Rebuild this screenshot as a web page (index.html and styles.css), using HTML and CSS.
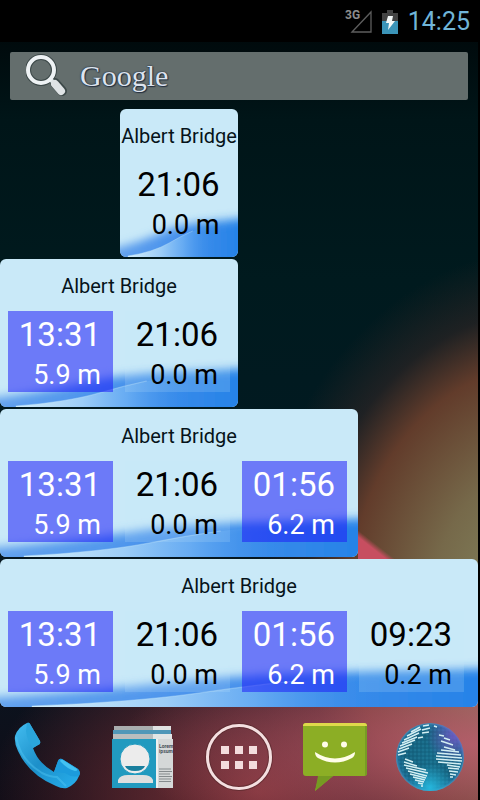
FILE: index.html
```html
<!DOCTYPE html>
<html lang="en">
<head>
<meta charset="utf-8">
<meta name="viewport" content="width=device-width, initial-scale=1">
<title>Home</title>
<link rel="stylesheet" href="styles.css">
</head>
<body>
<svg class="defs" aria-hidden="true">
  <defs>
    <linearGradient id="deep" x1="0" y1="0" x2="1" y2="0">
      <stop offset="0" stop-color="#6aa6ee"/>
      <stop offset=".45" stop-color="#4a93ec"/>
      <stop offset="1" stop-color="#1c7ee6"/>
    </linearGradient>
    <linearGradient id="front" x1="0" y1="0" x2="1" y2="0">
      <stop offset="0" stop-color="#d4effb"/>
      <stop offset=".3" stop-color="#9ccdf7"/>
      <stop offset=".5" stop-color="#6fb2f4" stop-opacity=".8"/>
      <stop offset=".8" stop-color="#2f88ea" stop-opacity="0"/>
    </linearGradient>
    <filter id="soft" x="-20%" y="-40%" width="140%" height="180%"><feGaussianBlur stdDeviation="3 5"/></filter>
    <symbol id="wave" viewBox="0 -12 120 60" preserveAspectRatio="none">
      <path d="M-20 43 Q20 34 46 22 Q62 15 88 13 Q108 11 140 8 V70 H-20Z" fill="url(#deep)" filter="url(#soft)"/>
      <path d="M8 47 Q34 43 50 34 Q70 22 91 17 Q108 15 120 17 V48 H8Z" fill="url(#front)"/>
      <path d="M8 47 Q34 43 50 34 Q62 27 74 22" fill="none" stroke="#bfe4fa" stroke-opacity=".4" stroke-width="1"/>
    </symbol>
  </defs>
</svg>
<div class="screen">
  <header class="status">
    <svg class="signal" viewBox="0 0 28 26" role="img" aria-label="3G signal">
      <text x="1" y="10" class="signal-text">3G</text>
      <path d="M8 23 L27 3 V23Z" fill="none" stroke="#5d5d5d" stroke-width="1.3"/>
    </svg>
    <svg class="battery" viewBox="0 0 16 24" role="img" aria-label="Battery charging">
      <path d="M0 3h5V0h6v3h5v21H0Z" fill="#434343"/>
      <path d="M0 11h16v13H0Z" fill="#3b94b8"/>
      <path d="M6 6h5l-1 5h3L6 20l1-7H4Z" fill="#f4f8f8"/>
    </svg>
    <time class="clock">14:25</time>
  </header>

  <button class="search" type="button" aria-label="Google search">
    <svg class="lens" viewBox="0 0 44 44" aria-hidden="true">
      <path d="M29 29 L36 37" stroke="#3c4848" stroke-width="10" stroke-linecap="round"/>
      <circle cx="15" cy="16" r="13" fill="none" stroke="#3c4848" stroke-width="6"/>
      <path d="M24 25 L29 30" stroke="#dfe5e7" stroke-width="4"/>
      <path d="M29 30 L35 37" stroke="#dfe3e5" stroke-width="8" stroke-linecap="round"/>
      <circle cx="15" cy="16" r="13" fill="none" stroke="#eef2f4" stroke-width="4"/>
    </svg>
    <span class="brand">Google</span>
  </button>

  <main class="widgets">
    <section class="widget span-1">
      <svg class="wave" aria-hidden="true"><use href="#wave"/></svg>
      <h2>Albert Bridge</h2>
      <ul class="tides">
        <li class="tide"><time>21:06</time><span>0.0 m</span></li>
      </ul>
    </section>
    <section class="widget span-2">
      <svg class="wave" aria-hidden="true"><use href="#wave"/></svg>
      <h2>Albert Bridge</h2>
      <ul class="tides">
        <li class="tide high"><time>13:31</time><span>5.9 m</span></li>
        <li class="tide"><time>21:06</time><span>0.0 m</span></li>
      </ul>
    </section>
    <section class="widget span-3">
      <svg class="wave" aria-hidden="true"><use href="#wave"/></svg>
      <h2>Albert Bridge</h2>
      <ul class="tides">
        <li class="tide high"><time>13:31</time><span>5.9 m</span></li>
        <li class="tide"><time>21:06</time><span>0.0 m</span></li>
        <li class="tide high"><time>01:56</time><span>6.2 m</span></li>
      </ul>
    </section>
    <section class="widget span-4">
      <svg class="wave" aria-hidden="true"><use href="#wave"/></svg>
      <h2>Albert Bridge</h2>
      <ul class="tides">
        <li class="tide high"><time>13:31</time><span>5.9 m</span></li>
        <li class="tide"><time>21:06</time><span>0.0 m</span></li>
        <li class="tide high"><time>01:56</time><span>6.2 m</span></li>
        <li class="tide"><time>09:23</time><span>0.2 m</span></li>
      </ul>
    </section>
  </main>

  <nav class="dock" aria-label="Dock">
    <button type="button" aria-label="Phone">
      <svg viewBox="0 0 72 72">
        <defs>
          <linearGradient id="ph" x1="0" y1="0" x2="1" y2="1"><stop offset="0" stop-color="#43bdf0"/><stop offset=".5" stop-color="#1c8fc9"/><stop offset="1" stop-color="#27b0ee"/></linearGradient>
        </defs>
        <path d="M15 2 Q17 1 18 3 L28 20 Q29 23 26 24 L21 27 Q26 42 42 51 L46 40 Q47 37 50 38 L66 48 Q69 51 67 55 Q64 63 55 67 Q50 68 44 65 Q17 54 6 30 Q2 22 3 15 Q6 6 15 2Z" fill="url(#ph)"/>
        <path d="M15 2 Q17 1 18 3 L28 20 Q29 23 26 24 L21 27 Q15 20 14 10Z" fill="#2ba6dc"/>
        <path d="M4 16 Q8 39 30 52 Q38 56 45 56 L54 65" fill="none" stroke="#54caf5" stroke-width="2" opacity=".4"/>
        <path d="M46 40 Q47 37 50 38 L66 48 Q69 51 67 55 Q60 57 53 52 L42 51Z" fill="#1c9bdc"/>
        <path d="M48 40 Q49 38 51 39 L65 48 Q66 50 63 50 Q55 48 48 40Z" fill="#43c2f2"/>
      </svg>
    </button>
    <button type="button" aria-label="People">
      <svg viewBox="0 0 72 72">
        <path d="M7 5h57v10H7Z" fill="#a9adae"/><path d="M46 5h18v10H46Z" fill="#e0e2e2"/>
        <path d="M6 9h58v4H6Z" fill="#5097b8"/>
        <path d="M6 13h59v8H6Z" fill="#b9bdbe"/><path d="M46 13h19v8H46Z" fill="#e3e5e5"/>
        <path d="M5 18h44v49H5Z" fill="#219abf"/>
        <path d="M49 18h17v49H49Z" fill="#d5d8d8"/><path d="M49 18h2v49h-2Z" fill="#eef0f0"/>
        <path d="M11 62v-3q2-5 10-5h15q8 0 10 5v3Z" fill="#dedfdf"/>
        <circle cx="28" cy="38" r="15" fill="#ececec" stroke="#219abf"/>
        <path d="M18 45h20q-2 5-10 5T18 45Z" fill="#197f9e"/>
        <text x="52" y="27" class="tiny">Lorem</text><text x="52" y="32" class="tiny">ipsum</text>
        <path d="M52 48h12M52 50.500h13M52 53h11M52 55.500h13M52 58h12M52 60.500h12" stroke="#858b8d"/>
      </svg>
    </button>
    <button type="button" aria-label="All apps">
      <svg viewBox="0 0 72 72">
        <circle cx="36" cy="36" r="31.500" fill="none" stroke="#532629" stroke-opacity=".6" stroke-width="5"/>
        <circle cx="36" cy="36" r="31.500" fill="none" stroke="#f4dfe0" stroke-width="3"/>
        <path d="M18 25h8v8h-8ZM32 25h8v8h-8ZM46 25h8v8h-8ZM18 40h8v8h-8ZM32 40h8v8h-8ZM46 40h8v8h-8Z" fill="#f3dddd"/>
      </svg>
    </button>
    <button type="button" aria-label="Messaging">
      <svg viewBox="0 0 72 72">
        <path d="M7 2h58q3 0 3 3v47q0 3-3 3H34L16 70l4-15H7q-3 0-3-3V5q0-3 3-3Z" fill="#8cae25"/>
        <path d="M66 4h2v48q0 3-3 3h1Z" fill="#779b25"/>
        <path d="M4 5q0-3 3-3h58q3 0 3 3Z" fill="#dfd94b"/>
        <path d="M19 55h15L16 70Z" fill="#769a22"/>
        <circle cx="26" cy="23.500" r="3" fill="#fffde8"/><circle cx="45" cy="23.500" r="3" fill="#fffde8"/>
        <path d="M16 31 Q36 44 56 31 Q56 35 53 37 Q36 46 19 37 Q16 35 16 31Z" fill="#fffde8"/>
      </svg>
    </button>
    <button type="button" aria-label="Browser">
      <svg viewBox="0 0 72 72">
        <defs>
          <radialGradient id="gl" cx=".5" cy=".5" r=".5"><stop offset="0" stop-color="#176d8b"/><stop offset=".75" stop-color="#16627f"/><stop offset=".93" stop-color="#1c6e96"/><stop offset="1" stop-color="#4b8db8"/></radialGradient>
          <radialGradient id="rim" cx=".85" cy=".2" r=".4"><stop offset="0" stop-color="#7956c8" stop-opacity=".8"/><stop offset="1" stop-color="#7956c8" stop-opacity="0"/></radialGradient>
          <radialGradient id="low" cx=".5" cy=".95" r=".35"><stop offset="0" stop-color="#25b6dc"/><stop offset="1" stop-color="#25b6dc" stop-opacity="0"/></radialGradient>
          <pattern id="dots" width="4" height="4" patternUnits="userSpaceOnUse"><circle cx="1" cy="1" r=".8" fill="#2d8fac"/><circle cx="3" cy="3" r=".8" fill="#0f526b"/></pattern>
        </defs>
        <circle cx="36" cy="36" r="34" fill="url(#gl)"/>
        <circle cx="36" cy="36" r="32" fill="url(#dots)" opacity=".6"/>
        <circle cx="36" cy="36" r="34" fill="url(#low)"/><circle cx="36" cy="36" r="34" fill="url(#rim)"/>
        <g fill="none" stroke="#d3eff3" stroke-width="1.500">
          <path d="M17 11l9-5M13 15l14-7M10 19l15-7M8 22l15-6M6 25l15-6M5 28l13-5M4 31l11-4M4 34l8-2M29 5l6-1M28 9l8-2M28 12l7-1M40 5l3 1M24 17l5-1"/>
          <path d="M11 38l8 3M10 41l13 4M10 44l22 5M12 47l22 5M14 50l19 5M16 53l16 4M19 56l12 3M21 59l9 2M24 62l5 1M27 65l2 0"/>
          <path d="M50 17l6 2M47 20l12 4M45 14l5 1M50 26l11 3M47 29l18 2M43 32l24 2M42 35l26 2M42 38l26 2M44 41l23 2M53 44l13 2M54 47l11 1M55 50l9 1M56 53l6 1M56 56l3 0"/>
        </g>
      </svg>
    </button>
  </nav>
</div>
</body>
</html>
```
FILE: styles.css
```css
* { box-sizing: border-box; }

body {
  margin: 0;
  background: #000;
  font-family: Roboto, "Liberation Sans", sans-serif;
}

.defs { position: absolute; width: 0; height: 0; }

button {
  padding: 0;
  border: 0;
  background: none;
  font: inherit;
  cursor: pointer;
}

.screen {
  display: flex;
  flex-direction: column;
  min-height: 100vh;
  margin-right: 2px;
  background:
    radial-gradient(ellipse 75% 14% at 100% 93%, rgba(190, 95, 112, .85), transparent),
    radial-gradient(ellipse 56% 22% at 54% 99%, rgba(130, 52, 58, .95), rgba(110, 45, 52, .6) 50%, transparent),
    linear-gradient(38deg, #c74e60 38%, transparent 46%) 358px 530px / 60px 40px no-repeat,
    radial-gradient(ellipse 62% 45% at 115% 76%, #81815b 15%, #76694a 40%, #623c2b 68%, rgba(60, 40, 38, .5) 83%, transparent),
    linear-gradient(#000a0c 5%, #001518 15%, #001a1e 35%, #021a22 60%, #0c121d 88%, #100d17);
}

.status {
  display: flex;
  align-items: center;
  justify-content: flex-end;
  gap: 10px;
  height: 42px;
  padding: 2px 8px 0;
  background: #000;
}

.signal { width: 28px; height: 26px; }
.signal-text { font-size: 12px; font-weight: 700; fill: #8d8d8d; }
.battery { width: 16px; height: 24px; }

.clock {
  font-size: 25px;
  line-height: 30px;
  color: #70b5d8;
}

.search {
  display: flex;
  align-items: center;
  gap: 10px;
  height: 48px;
  margin: 10px 10px 9px;
  padding: 0 16px;
  border-radius: 2px;
  background: #646e6d;
}

.lens { width: 44px; height: 44px; }

.brand {
  font-family: "Liberation Serif", serif;
  font-size: 30px;
  line-height: 40px;
  color: #dde3ee;
  text-shadow: 0 0 1px #253040, 0 0 2px #253040, 1px 1px 1px #253040;
}

.widgets {
  display: grid;
  grid-template-columns: repeat(4, minmax(0, 1fr));
  gap: 2px;
}

.widget {
  position: relative;
  overflow: hidden;
  min-height: 148px;
  border-radius: 6px;
  background: #c9e9f8;
}

.span-1 { grid-column: 2 / span 1; }
.span-2 { grid-column: 1 / span 2; }
.span-3 { grid-column: 1 / span 3; }
.span-4 { grid-column: 1 / span 4; }

.wave {
  position: absolute;
  left: 0;
  bottom: 0;
  width: 100%;
  height: 60px;
}

.widget h2 {
  position: relative;
  margin: 0;
  padding: 13px 0 11px;
  font-size: 20px;
  line-height: 28px;
  font-weight: 400;
  text-align: center;
  white-space: nowrap;
  color: #06131a;
}

.tides {
  position: relative;
  display: grid;
  grid-auto-flow: column;
  grid-auto-columns: minmax(0, 105px);
  gap: 12px;
  margin: 0;
  padding: 0 8px;
  list-style: none;
}

.span-1 .tides { padding: 0 6px; justify-content: center; }

.tide {
  display: flex;
  flex-direction: column;
  height: 81px;
  padding: 4px 12px 0 8px;
  text-align: right;
  color: #000;
  background: rgba(201, 233, 248, .18);
}

.span-1 .tide { background: none; }

.tide.high {
  color: #fff;
  background: rgba(30, 28, 248, .54);
}

.tide time { font-size: 33px; line-height: 40px; }
.tide span { font-size: 27px; line-height: 40px; }

.dock {
  display: grid;
  grid-template-columns: repeat(5, minmax(0, 1fr));
  align-items: center;
  flex: 1;
  padding-top: 7px;
}

.dock button { display: flex; justify-content: center; }
.dock svg { width: 72px; height: 72px; }
.tiny { font-size: 5px; font-weight: 700; fill: #49505a; }
```
